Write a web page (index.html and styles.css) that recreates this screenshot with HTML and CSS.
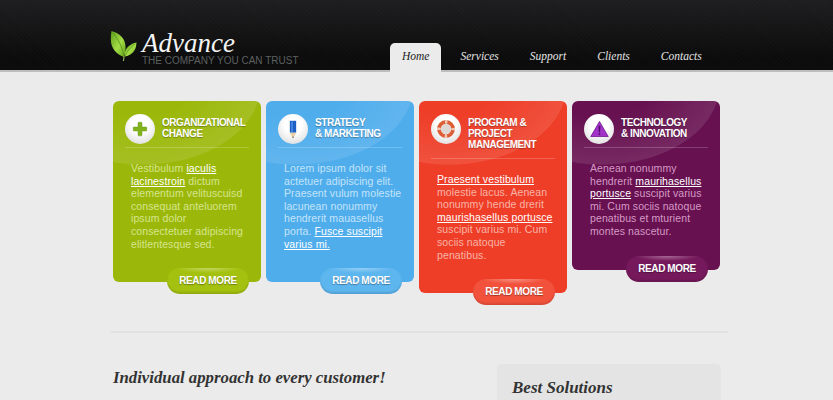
FILE: index.html
```html
<!DOCTYPE html>
<html lang="en">
<head>
  <meta charset="UTF-8" />
  <title>Advance</title>
  <link rel="stylesheet" href="styles.css">
</head>
<body>
  <header class="top">
    <div class="top-inner">
      <div class="logo">
        <svg class="leaf" viewBox="0 0 28 32" width="28" height="32">
          <defs>
            <linearGradient id="leafA" x1="0" y1="0" x2="1" y2="1">
              <stop offset="0" stop-color="#5c9e1a"/>
              <stop offset=".55" stop-color="#a4dc46"/>
              <stop offset="1" stop-color="#5f9f18"/>
            </linearGradient>
          </defs>
          <path d="M14 26l-.5 5" fill="none" stroke="#8fae5a" stroke-width="1.200"/>
          <path d="M1.500 1C9 3 15 8 15.500 16c.2 4-.5 8-1.500 11C8 25 2 20 1 12 .6 8 1 4 1.500 1z" fill="url(#leafA)"/>
          <path d="M26.500 12.500c-5 1-9.500 4-11 8-.8 2-.8 4-.5 6 4-.8 8-3 10-7 1-2 1.300-4.500 1.500-7z" fill="url(#leafA)"/>
          <path d="M3 3c5 6 9 13 11 23" fill="none" stroke="#4f8a14" stroke-width=".7"/>
          <path d="M25 14c-4 3-8 7-10 12" fill="none" stroke="#4f8a14" stroke-width=".6"/>
        </svg>
        <div class="logo-text">
          <div class="logo-name">Advance</div>
          <div class="logo-slogan">THE COMPANY YOU CAN TRUST</div>
        </div>
      </div>
      <nav class="menu">
        <a class="active" href="#">Home</a>
        <a href="#">Services</a>
        <a href="#">Support</a>
        <a href="#">Clients</a>
        <a href="#">Contacts</a>
      </nav>
    </div>
  </header>

  <main class="page">
    <section class="cards">
      <article class="card green">
        <div class="card-head">
          <span class="badge">
            <svg viewBox="0 0 20 20" width="16" height="16"><path d="M7.500 2.500a1 1 0 0 1 1-1h3a1 1 0 0 1 1 1v5h5a1 1 0 0 1 1 1v3a1 1 0 0 1-1 1h-5v5a1 1 0 0 1-1 1h-3a1 1 0 0 1-1-1v-5h-5a1 1 0 0 1-1-1v-3a1 1 0 0 1 1-1h5z" fill="#82b21e" stroke="#6c9810" stroke-width=".6"/></svg>
          </span>
          <h3>Organizational<br>Change</h3>
        </div>
        <p>Vestibulum <a href="#">iaculis lacinestroin</a> dictum elementum velituscuisd consequat anteluorem ipsum dolor consectetuer adipiscing elitlentesque sed.</p>
        <a class="more" href="#">READ MORE</a>
      </article>

      <article class="card blue">
        <div class="card-head">
          <span class="badge">
            <svg viewBox="0 0 10 24" width="8" height="19"><path d="M1 1h8v15H1z" fill="#1c5fc4"/><path d="M1 16h8l-4 7z" fill="#e6cfa0"/><path d="M4 21h2l-1 2z" fill="#333"/><path d="M3 2h1.500v13H3z" fill="#5b9cf0"/></svg>
          </span>
          <h3>Strategy<br>&amp; Marketing</h3>
        </div>
        <p>Lorem ipsum dolor sit actetuer adipiscing elit. Praesent vulum molestie lacunean nonummy hendrerit mauasellus porta. <a href="#">Fusce suscipit varius mi.</a></p>
        <a class="more" href="#">READ MORE</a>
      </article>

      <article class="card red">
        <div class="card-head">
          <span class="badge">
            <svg viewBox="0 0 24 24" width="20" height="20"><circle cx="12" cy="12" r="6" fill="#ddd8d4"/><circle cx="12" cy="12" r="8.500" fill="none" stroke="#dd5f38" stroke-width="4.500"/><circle cx="12" cy="12" r="8.500" fill="none" stroke="#f0c8b4" stroke-width="4.500" stroke-dasharray="3 10.350" stroke-dashoffset="1.500"/></svg>
          </span>
          <h3>Program &amp;<br>Project<br>Management</h3>
        </div>
        <p><a href="#">Praesent vestibulum</a> molestie lacus. Aenean nonummy hende drerit <a href="#">maurishasellus portusce</a> suscipit varius mi. Cum sociis natoque penatibus.</p>
        <a class="more" href="#">READ MORE</a>
      </article>

      <article class="card purple">
        <div class="card-head">
          <span class="badge">
            <svg viewBox="0 0 24 22" width="19" height="18"><path d="M12 1.500L23 20.500H1z" fill="#a232c8" stroke="#6d1590" stroke-linejoin="round"/><path d="M10.800 7h2.400l-.5 8h-1.400zM11 16.500h2v2h-2z" fill="#4f0a68"/></svg>
          </span>
          <h3>Technology<br>&amp; Innovation</h3>
        </div>
        <p>Aenean nonummy hendrerit <a href="#">maurihasellus portusce</a> suscipit varius mi. Cum sociis natoque penatibus et mturient montes nascetur.</p>
        <a class="more" href="#">READ MORE</a>
      </article>
    </section>

    <hr class="divider">

    <section class="lower">
      <h2 class="lead">Individual approach to every customer!</h2>
      <aside class="solutions">
        <h2>Best Solutions</h2>
      </aside>
    </section>
  </main>
</body>
</html>
```

FILE: styles.css
```css
* {
  margin: 0;
  padding: 0;
  box-sizing: border-box;
}
html, body {
  height: 400px;
  overflow: hidden;
}
body {
  background: #ebebeb;
  font-family: "Liberation Sans", Arial, sans-serif;
  color: #333;
}
a {
  color: inherit;
}

/* header */
.top {
  height: 72px;
  border-bottom: 2px solid #bdbdbd;
  background:
    repeating-linear-gradient(45deg, rgba(255,255,255,.012) 0 1px, transparent 1px 3px),
    linear-gradient(#1e1e20, #0b0b0b 85%, #0c0c0c);
}
.top-inner {
  display: flex;
  align-items: flex-end;
  height: 70px;
  padding-left: 110px;
}
.logo {
  display: flex;
  width: 280px;
  height: 70px;
  padding-top: 30px;
}
.leaf {
  flex: none;
  margin-right: 4px;
}
.logo-name {
  font: italic 27px/25px "Liberation Serif", serif;
  color: #f4f4f4;
  margin-top: 1px;
}
.logo-slogan {
  font-size: 10px;
  line-height: 9px;
  color: #5b6060;
  white-space: nowrap;
}
.menu {
  display: flex;
  gap: 7px;
  height: 29px;
  margin-bottom: -2px;
}
.menu a {
  padding: 5px 12px 0;
  font: italic 11.5px/16px "Liberation Serif", serif;
  color: #e4e4e4;
  text-decoration: none;
}
.menu a.active {
  background: #ebebeb;
  border-radius: 5px 5px 0 0;
  color: #222;
}

/* cards */
.page {
  padding: 29px 105px 0 111px;
}
.cards {
  display: flex;
  align-items: flex-start;
  gap: 5px;
  padding-left: 2px;
  margin-bottom: 38px;
}
.card {
  display: flex;
  flex-direction: column;
  width: 148px;
  border-radius: 6px;
  background: radial-gradient(ellipse 118px 80px at 30px -16px, rgba(255,255,255,0) 40%, rgba(255,255,255,.1) 99%, rgba(255,255,255,0) 100%), var(--main);
  color: var(--soft);
}
.green { --main: #9bb80a; --soft: #d6e58e; --btn: #a5c10f; }
.blue { --main: #4fadec; --soft: #c4e4f9; --btn: #5eb6ef; }
.red { --main: #ee3e28; --soft: #f9b4a6; --btn: #f2523c; }
.purple { --main: #671150; --soft: #d59ac6; --btn: #76195c; }

.card-head {
  display: flex;
  gap: 7px;
  margin: 0 12px;
  padding-top: 13px;
  border-bottom: 1px solid rgba(255,255,255,.2);
}
.badge {
  flex: none;
  display: flex;
  align-items: center;
  justify-content: center;
  width: 30px;
  height: 30px;
  border-radius: 50%;
  background: radial-gradient(circle at 50% 35%, #fff 35%, #d4d4d4);
}
.card h3 {
  padding: 3px 0 8px;
  font-size: 10px;
  line-height: 11px;
  font-weight: bold;
  letter-spacing: -.45px;
  text-transform: uppercase;
  color: #fff;
  text-shadow: 0 1px 1px rgba(0,0,0,.3);
  white-space: nowrap;
}
.card p {
  margin: 14px 14px 0 18px;
  font-size: 10.5px;
  line-height: 12.6px;
  letter-spacing: .1px;
}
.blue p {
  margin-right: 10px;
}
.card p a {
  color: #fff;
}
.more {
  align-self: flex-end;
  width: 82px;
  height: 26px;
  margin: 18px 12px -12px 0;
  border-radius: 13px;
  background: radial-gradient(ellipse 32px 5px at 50% 0, rgba(255,255,255,.35), rgba(255,255,255,0)), var(--btn);
  box-shadow: inset 0 -2px 2px rgba(0,0,0,.12);
  font-size: 10px;
  font-weight: bold;
  letter-spacing: -.4px;
  line-height: 26px;
  text-align: center;
  text-decoration: none;
  color: #fff;
  text-shadow: 0 1px 1px rgba(0,0,0,.35);
}

/* lower part */
.divider {
  height: 2px;
  border: 0;
  background: #e2e2e2;
}
.lower {
  display: flex;
  justify-content: space-between;
  padding: 31px 7px 0 2px;
}
.lower h2 {
  font: italic bold 17px/26px "Liberation Serif", serif;
  color: #333;
}
.lower .lead {
  margin-top: 1px;
  font-size: 16.75px;
}
.solutions {
  width: 224px;
  height: 120px;
  padding: 11px 15px;
  background: #e4e4e4;
  border-radius: 5px;
}
```
